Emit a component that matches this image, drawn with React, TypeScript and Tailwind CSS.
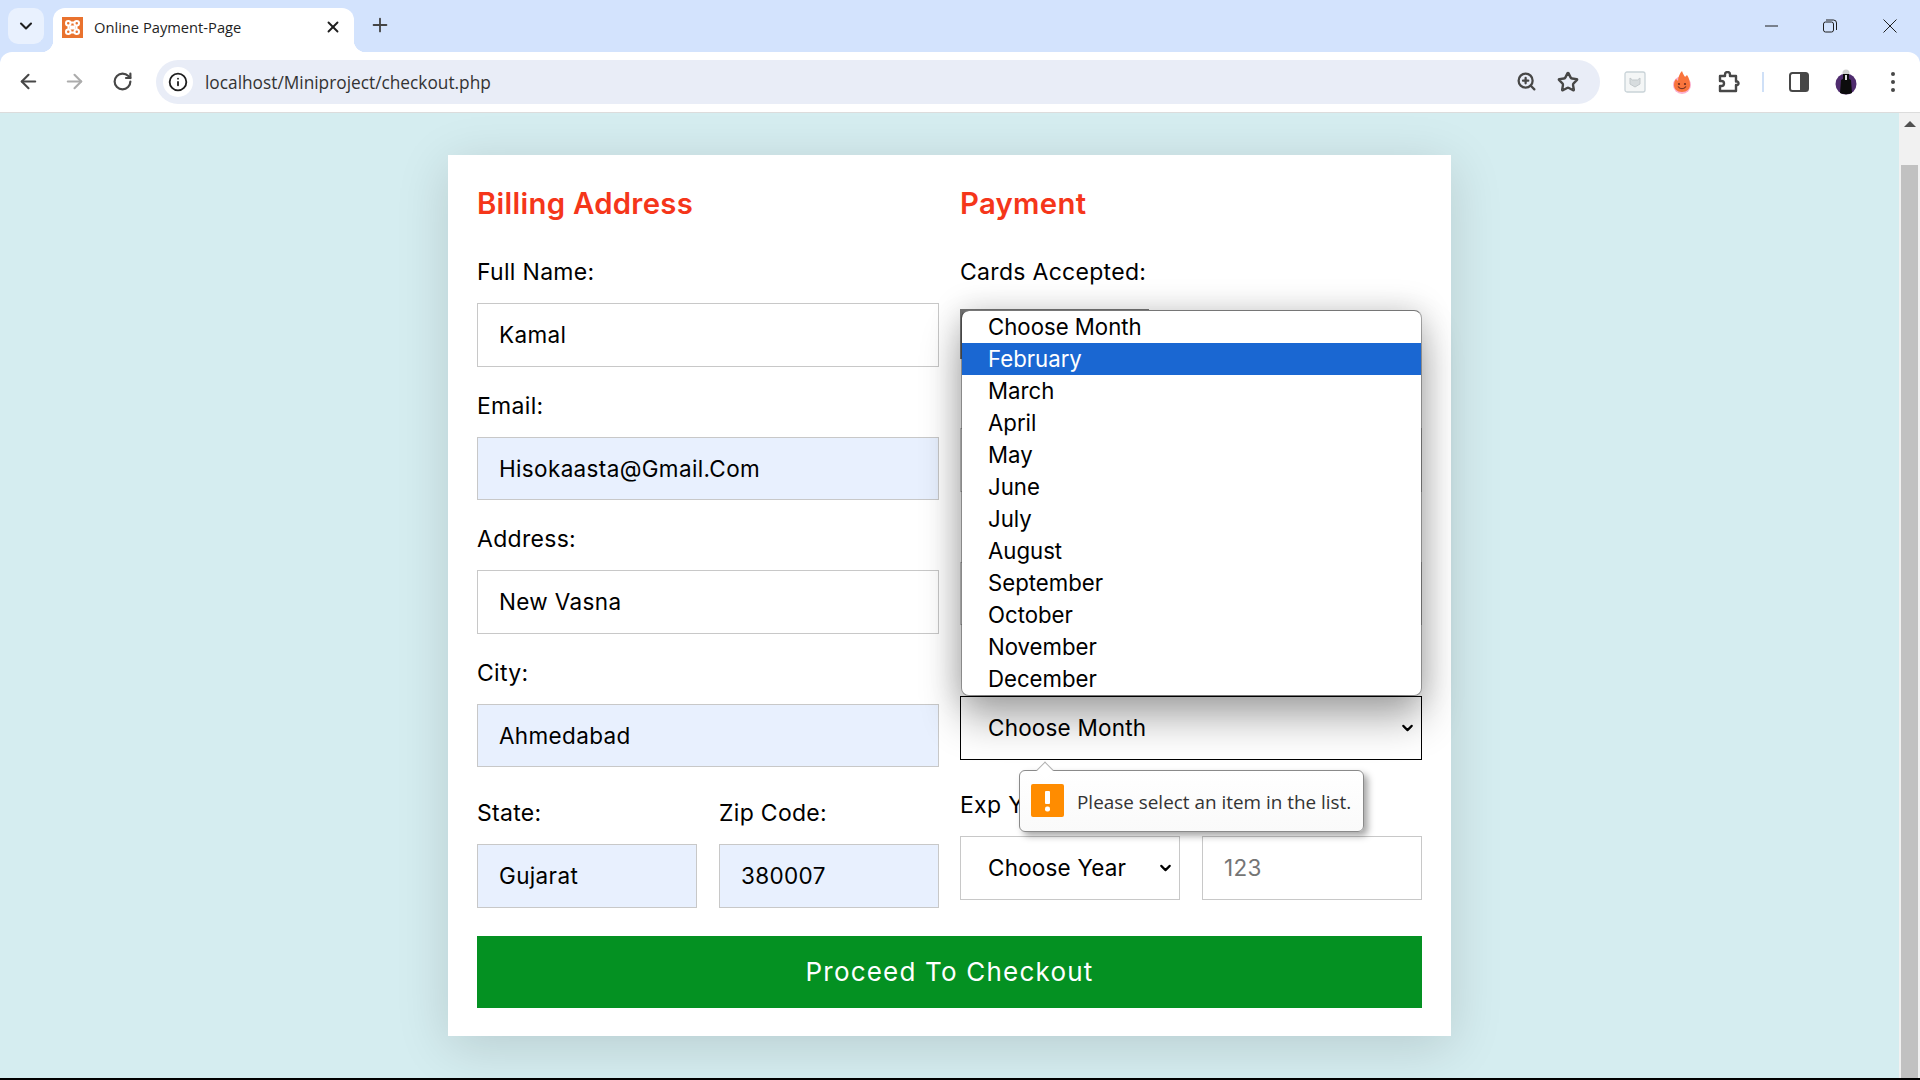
import React from 'react';
import { ArrowLeft, ArrowRight, ChevronDown, Info, Plus, RotateCw, Star, X, ZoomIn } from 'lucide-react';

const months = ['Choose Month', 'February', 'March', 'April', 'May', 'June', 'July', 'August', 'September', 'October', 'November', 'December'];

const inputClass = 'w-full h-[63.5px] border border-[#c8c8c8] px-[21px] text-[22.5px] tracking-[0.35px] text-black outline-none placeholder:text-[#757575]';
const labelClass = 'block h-9 text-[23px] leading-9 tracking-[0.3px] text-black';
const titleClass = 'mb-[30px] h-10 text-[29.3px] font-semibold leading-10 tracking-[0.3px] text-[#f5361a]';

const Field = ({ label, value, filled }: { label?: string; value: string; filled?: boolean }) => (
  <div className="mb-[21px]">
    <label className={`${labelClass} mb-[13px]`}>{label}</label>
    <input readOnly value={value} className={`${inputClass} ${filled ? 'bg-[#e8f0fe]' : 'bg-white'}`} />
  </div>
);

const SelectBox = ({ text, height, border }: { text: string; height: string; border: string }) => (
  <div className="relative">
    <select defaultValue="" className={`${height} ${border} w-full appearance-none border bg-white pl-[27px] text-[22.5px] tracking-[0.2px] text-black outline-none`}>
      <option value="">{text}</option>
    </select>
    <ChevronDown className="pointer-events-none absolute right-[6px] top-1/2 h-[17px] w-[17px] -translate-y-1/2 text-black" strokeWidth={3} />
  </div>
);

const XamppIcon = () => (
  <svg width="21" height="21" viewBox="0 0 21 21">
    <rect width="21" height="21" fill="#e9722e" />
    <g fill="none" stroke="#fff" strokeWidth="2">
      <rect x="4" y="4" width="4.5" height="4.5" rx="2.2" />
      <rect x="12.5" y="4" width="4.5" height="4.5" rx="2.2" />
      <rect x="4" y="12.5" width="4.5" height="4.5" rx="2.2" />
      <rect x="12.5" y="12.5" width="4.5" height="4.5" rx="2.2" />
      <path d="M8 5.5h5M8 15.500h5M6.500 8v5M14.500 8v5" />
    </g>
    <rect x="7.5" y="8.5" width="6" height="4" fill="#fff" />
  </svg>
);

const TabStrip = () => (
  <div className="relative flex h-[52px] items-end bg-[#d3e3fd] pl-2">
    <div className="mb-2 flex h-9 w-9 items-center justify-center rounded-[10px] bg-[#e9f1fe]">
      <ChevronDown className="h-5 w-5 text-[#1f1f1f]" strokeWidth={2.5} />
    </div>
    <div className="relative ml-[9px] flex h-11 w-[301px] items-center rounded-t-[12px] bg-white pb-[6px] pl-[9px]">
      <span className="absolute -left-3 bottom-0 h-3 w-3 bg-[radial-gradient(circle_at_0_0,#d3e3fd_12px,#fff_12.5px)]" />
      <span className="absolute -right-3 bottom-0 h-3 w-3 bg-[radial-gradient(circle_at_100%_0,#d3e3fd_12px,#fff_12.5px)]" />
      <XamppIcon />
      <span className="ml-[11px] text-[14.7px] text-[#1f1f1f] [font-family:'Open_Sans',sans-serif]">Online Payment-Page</span>
      <X className="ml-auto mr-3 h-[18px] w-[18px] text-[#1f1f1f]" strokeWidth={2.5} />
    </div>
    <Plus className="mb-4 ml-[15px] h-[22px] w-[22px] text-[#444]" strokeWidth={2} />
    <div className="absolute right-0 top-0 flex h-[52px] items-center text-[#1f1f1f]">
      <svg width="14" height="14" viewBox="0 0 14 14" className="mr-[44px]"><path d="M0 7h13" stroke="currentColor" strokeWidth="1" /></svg>
      <svg width="14" height="14" viewBox="0 0 14 14" className="mr-[46px]" fill="none" stroke="currentColor"><rect x="0.5" y="3" width="10" height="10" rx="2" /><path d="M3 1h7.5A3 3 0 0 1 13.500 4v7" /></svg>
      <svg width="14" height="14" viewBox="0 0 14 14" className="mr-[23px]"><path d="M0.500 0.500l13 13M13.500 0.500l-13 13" stroke="currentColor" strokeWidth="1" /></svg>
    </div>
  </div>
);

const Toolbar = () => (
  <div className="bg-[#d3e3fd]">
    <div className="flex h-[61px] items-center rounded-t-[12px] border-b border-[#dcdcdc] bg-white pb-px pl-[17px]">
      <ArrowLeft className="h-[23px] w-[23px] text-[#474747]" strokeWidth={2.2} />
      <ArrowRight className="ml-[23px] h-[23px] w-[23px] text-[#acacac]" strokeWidth={2.2} />
      <RotateCw className="ml-[26px] h-[21px] w-[21px] text-[#474747]" strokeWidth={2.5} />
      <div className="ml-[23px] flex h-11 w-[1444px] items-center rounded-full bg-[#e9edf7] pl-[7px] pr-[21px]">
        <div className="flex h-[30px] w-[30px] items-center justify-center rounded-full bg-white">
          <Info className="h-[20px] w-[20px] text-[#1f1f1f]" strokeWidth={2.2} />
        </div>
        <span className="ml-3 pt-[2px] text-[17.3px] text-[#333] [font-family:'Open_Sans',sans-serif]">localhost/Miniproject/checkout.php</span>
        <ZoomIn className="ml-auto h-[21px] w-[21px] text-[#474747]" strokeWidth={2.6} />
        <Star className="ml-5 h-[22px] w-[22px] text-[#474747]" strokeWidth={2.6} />
      </div>
      <svg width="22" height="22" viewBox="0 0 22 22" className="ml-6">
        <rect x="1" y="1" width="20" height="20" rx="2" fill="#f4f6f6" stroke="#c9d3d8" strokeWidth="1.3" />
        <path d="M6 7l2.500 2h5L16 7v6l-5 3-5-3z" fill="#d7dcde" stroke="#c3c9cc" />
      </svg>
      <svg width="20" height="24" viewBox="0 0 20 24" className="ml-[26px]">
        <circle cx="10" cy="15" r="9" fill="#fbb1d0" />
        <path d="M10 22C5 22 2 19 2 15c0-3 1-5 2-6l2 2c0-4 2-8 4-10 1 3 2 4 3 6l2-2c2 3 3 6 3 10 0 4-3 7-8 7z" fill="#f9743c" />
        <circle cx="7" cy="14" r="1.100" fill="#6b2b1f" />
        <circle cx="13" cy="14" r="1.100" fill="#6b2b1f" />
        <path d="M6 16.500c2 3 6 3 8 0" fill="none" stroke="#6b2b1f" strokeWidth="1.100" />
      </svg>
      <svg width="23" height="22" viewBox="0 0 23 22" className="ml-[26px]">
        <path d="M2 5h5V3.500a2.500 2.500 0 0 1 5 0V5h6v5.500h1.500a2 2 0 0 1 0 3.500H18v6H2v-5h1.500a2.500 2.500 0 0 0 0-5H2z" fill="none" stroke="#474747" strokeWidth="2.4" strokeLinejoin="round" />
      </svg>
      <div className="ml-[21px] h-[20px] w-[2px] bg-[#cfe0f7]" />
      <svg width="20" height="20" viewBox="0 0 20 20" className="ml-[25px]">
        <rect x="1" y="1" width="18" height="18" rx="2.5" fill="#fff" stroke="#474747" strokeWidth="2" />
        <path d="M11 1h5.500A2.500 2.500 0 0 1 19 3.500v13a2.500 2.500 0 0 1-2.500 2.500H11z" fill="#474747" />
      </svg>
      <svg width="22" height="26" viewBox="0 0 22 26" className="ml-[26px]">
        <circle cx="11" cy="15" r="10.5" fill="#4f2c6e" />
        <circle cx="11" cy="4" r="3.5" fill="#cfcfcf" />
        <path d="M8 5h6v5l2 1 1 13c-3 1.500-9 1.500-12 0l1-13 2-1z" fill="#0c0c0c" />
        <rect x="10" y="6" width="2" height="5" fill="#ddd" />
      </svg>
      <div className="ml-[34px] flex flex-col gap-[4px]">
        <span className="h-[4px] w-[4px] rounded-full bg-[#474747]" />
        <span className="h-[4px] w-[4px] rounded-full bg-[#474747]" />
        <span className="h-[4px] w-[4px] rounded-full bg-[#474747]" />
      </div>
    </div>
  </div>
);

const MonthDropdown = () => (
  <div className="absolute left-px top-[126px] z-10 w-[461px] overflow-hidden rounded-[8px] border border-black/30 border-t-[#767676] bg-white bg-clip-padding shadow-[0_0_32px_rgba(0,0,0,0.18),0_24px_40px_rgba(0,0,0,0.3)]">
    {months.map((m) => (
      <div key={m} className={`h-8 pl-[26px] text-[22.2px] leading-8 ${m === 'February' ? 'bg-[#1a67d2] text-white' : 'text-black'}`}>{m}</div>
    ))}
  </div>
);

const ValidationBubble = () => (
  <div className="absolute left-[59px] top-[586px] z-20 flex h-[62px] w-[345px] items-center rounded-[6px] border border-[#8a8a8a] bg-gradient-to-b from-white to-[#fafafa] pl-[11px] shadow-[4px_4px_7px_rgba(0,0,0,0.35)]">
    <span className="absolute -top-[7px] left-[19px] h-3 w-3 rotate-45 border-l border-t border-[#b0b0b0] bg-white" />
    <svg width="33" height="33" viewBox="0 0 33 33" className="-mt-0.5">
      <rect width="33" height="33" rx="2" fill="#ff8c00" />
      <rect x="14" y="7" width="5" height="13" rx="1" fill="#fff" />
      <rect x="14" y="22.5" width="5" height="5" rx="2" fill="#fff" />
    </svg>
    <span className="ml-[13px] pt-[2px] text-[18.9px] text-[#333] [font-family:'Open_Sans',sans-serif]">Please select an item in the list.</span>
  </div>
);

const CheckoutForm = () => (
  <div className="mx-auto mt-[42px] h-[881px] w-[1003px] bg-white px-[29px] pt-[29px] shadow-[0_10px_50px_rgba(0,0,0,0.14)]">
    <div className="flex gap-[21px]">
      <div className="w-[462px]">
        <h3 className={titleClass}>Billing Address</h3>
        <Field label="Full Name:" value="Kamal" />
        <Field label="Email:" value="Hisokaasta@Gmail.Com" filled />
        <Field label="Address:" value="New Vasna" />
        <Field label="City:" value="Ahmedabad" filled />
        <div className="mt-[28px] flex gap-[22px]">
          <div className="flex-1">
            <label className={`${labelClass} mb-[13px]`}>State:</label>
            <input readOnly value="Gujarat" className={`${inputClass} bg-[#e8f0fe]`} />
          </div>
          <div className="flex-1">
            <label className={`${labelClass} mb-[13px]`}>Zip Code:</label>
            <input readOnly value="380007" className={`${inputClass} bg-[#e8f0fe]`} />
          </div>
        </div>
      </div>
      <div className="relative w-[462px]">
        <h3 className={titleClass}>Payment</h3>
        <label className={`${labelClass} mb-[19px]`}>Cards Accepted:</label>
        <div className="mb-5 h-[50px] w-[189px] bg-[#777]" />
        {/* these two sit behind the open dropdown, their labels can't be read */}
        <Field value="" />
        <Field value="" />
        <div className="mb-[14px] h-9" />
        <SelectBox text="Choose Month" height="h-[63.5px]" border="border-black" />
        <div className="mt-[27px] flex gap-[22px]">
          <div className="flex-1">
            <label className={`${labelClass} mb-[13px]`}>Exp Year:</label>
            <SelectBox text="Choose Year" height="h-[64px]" border="border-[#c8c8c8]" />
          </div>
          <div className="flex-1">
            <div className="mb-[13px] h-9" />
            <input readOnly placeholder="123" className={`${inputClass} !h-[64px] bg-white`} />
          </div>
        </div>
        <MonthDropdown />
        <ValidationBubble />
      </div>
    </div>
    <button className="mt-[28px] h-[72px] w-[945px] bg-[#049122] text-[26px] tracking-[1.2px] text-white">Proceed To Checkout</button>
  </div>
);

export default function App() {
  return (
    <div className="flex h-screen flex-col overflow-hidden bg-black [font-family:Inter,sans-serif]">
      <TabStrip />
      <Toolbar />
      <div className="mb-[2px] flex min-h-0 flex-1 bg-[#d5edf0]">
        <div className="min-w-0 flex-1 overflow-hidden">
          <CheckoutForm />
        </div>
        <div className="flex w-[21px] flex-col items-center bg-[#f1f1f1] pt-2">
          <div className="h-0 w-0 border-x-[6px] border-b-[6px] border-x-transparent border-b-[#505050]" />
          <div className="mt-[38px] w-[17px] flex-1 bg-[#c1c1c1]" />
        </div>
      </div>
    </div>
  );
}
